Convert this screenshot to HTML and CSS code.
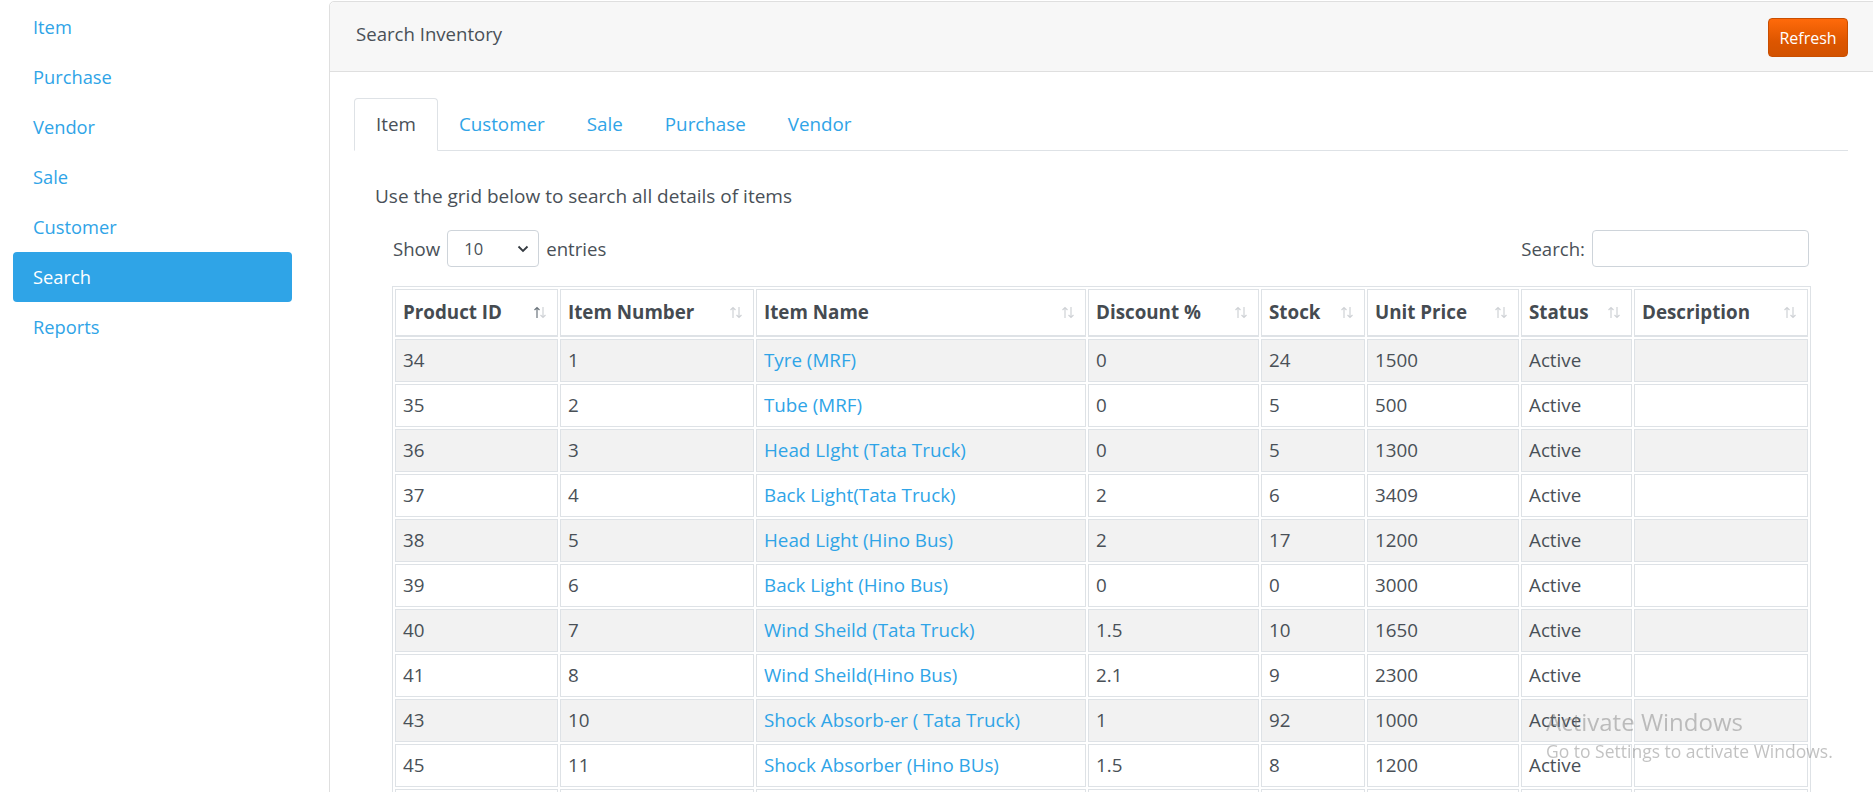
FILE: index.html
```html
<!DOCTYPE html>
<html lang="en">
<head>
<meta charset="utf-8">
<title>Search Inventory</title>
<link rel="stylesheet" href="styles.css">
</head>
<body>
<div class="page">
  <nav class="sidebar">
    <a class="side-link" href="#">Item</a>
    <a class="side-link" href="#">Purchase</a>
    <a class="side-link" href="#">Vendor</a>
    <a class="side-link" href="#">Sale</a>
    <a class="side-link" href="#">Customer</a>
    <a class="side-link active" href="#">Search</a>
    <a class="side-link" href="#">Reports</a>
  </nav>
  <main class="card">
    <div class="card-header">
      <span class="card-title">Search Inventory</span>
      <button class="btn-refresh">Refresh</button>
    </div>
    <div class="card-body">
      <ul class="tabs">
        <li><a class="tab active" href="#">Item</a></li>
        <li><a class="tab" href="#">Customer</a></li>
        <li><a class="tab" href="#">Sale</a></li>
        <li><a class="tab" href="#">Purchase</a></li>
        <li><a class="tab" href="#">Vendor</a></li>
      </ul>
      <p class="intro">Use the grid below to search all details of items</p>
      <div class="dt-wrapper">
        <div class="dt-controls">
          <label class="dt-length">Show
            <span class="select">10
              <svg class="caret" width="12" height="8" viewBox="0 0 12 8"><path d="M1.5 1.5 L6 6 L10.5 1.5" fill="none" stroke="#343a40" stroke-width="1.8"/></svg>
            </span>
            entries</label>
          <label class="dt-search">Search: <span class="search-input"></span></label>
        </div>
        <table class="grid">
          <thead>
            <tr>
              <th class="c1"><div class="th-in"><span>Product ID</span><svg class="sort" width="14" height="13" viewBox="0 0 14 13"><path d="M4 12 V1.5 M1.5 4 L4 1.5 L6.5 4" fill="none" stroke="#6c757d" stroke-width="1.2"/><path d="M10 1 V11.5 M7.5 9 L10 11.5 L12.5 9" fill="none" stroke="#cfd2d6" stroke-width="1.2"/></svg></div></th>
              <th class="c2"><div class="th-in"><span>Item Number</span><svg class="sort" width="14" height="13" viewBox="0 0 14 13"><path d="M4 12 V1.5 M1.5 4 L4 1.5 L6.5 4" fill="none" stroke="#cfd2d6" stroke-width="1.2"/><path d="M10 1 V11.5 M7.5 9 L10 11.5 L12.5 9" fill="none" stroke="#cfd2d6" stroke-width="1.2"/></svg></div></th>
              <th class="c3"><div class="th-in"><span>Item Name</span><svg class="sort" width="14" height="13" viewBox="0 0 14 13"><path d="M4 12 V1.5 M1.5 4 L4 1.5 L6.5 4" fill="none" stroke="#cfd2d6" stroke-width="1.2"/><path d="M10 1 V11.5 M7.5 9 L10 11.5 L12.5 9" fill="none" stroke="#cfd2d6" stroke-width="1.2"/></svg></div></th>
              <th class="c4"><div class="th-in"><span>Discount %</span><svg class="sort" width="14" height="13" viewBox="0 0 14 13"><path d="M4 12 V1.5 M1.5 4 L4 1.5 L6.5 4" fill="none" stroke="#cfd2d6" stroke-width="1.2"/><path d="M10 1 V11.5 M7.5 9 L10 11.5 L12.5 9" fill="none" stroke="#cfd2d6" stroke-width="1.2"/></svg></div></th>
              <th class="c5"><div class="th-in"><span>Stock</span><svg class="sort" width="14" height="13" viewBox="0 0 14 13"><path d="M4 12 V1.5 M1.5 4 L4 1.5 L6.5 4" fill="none" stroke="#cfd2d6" stroke-width="1.2"/><path d="M10 1 V11.5 M7.5 9 L10 11.5 L12.5 9" fill="none" stroke="#cfd2d6" stroke-width="1.2"/></svg></div></th>
              <th class="c6"><div class="th-in"><span>Unit Price</span><svg class="sort" width="14" height="13" viewBox="0 0 14 13"><path d="M4 12 V1.5 M1.5 4 L4 1.5 L6.5 4" fill="none" stroke="#cfd2d6" stroke-width="1.2"/><path d="M10 1 V11.5 M7.5 9 L10 11.5 L12.5 9" fill="none" stroke="#cfd2d6" stroke-width="1.2"/></svg></div></th>
              <th class="c7"><div class="th-in"><span>Status</span><svg class="sort" width="14" height="13" viewBox="0 0 14 13"><path d="M4 12 V1.5 M1.5 4 L4 1.5 L6.5 4" fill="none" stroke="#cfd2d6" stroke-width="1.2"/><path d="M10 1 V11.5 M7.5 9 L10 11.5 L12.5 9" fill="none" stroke="#cfd2d6" stroke-width="1.2"/></svg></div></th>
              <th class="c8"><div class="th-in"><span>Description</span><svg class="sort" width="14" height="13" viewBox="0 0 14 13"><path d="M4 12 V1.5 M1.5 4 L4 1.5 L6.5 4" fill="none" stroke="#cfd2d6" stroke-width="1.2"/><path d="M10 1 V11.5 M7.5 9 L10 11.5 L12.5 9" fill="none" stroke="#cfd2d6" stroke-width="1.2"/></svg></div></th>
            </tr>
          </thead>
          <tbody>
            <tr><td>34</td><td>1</td><td><a href="#">Tyre (MRF)</a></td><td>0</td><td>24</td><td>1500</td><td>Active</td><td></td></tr>
            <tr><td>35</td><td>2</td><td><a href="#">Tube (MRF)</a></td><td>0</td><td>5</td><td>500</td><td>Active</td><td></td></tr>
            <tr><td>36</td><td>3</td><td><a href="#">Head LIght (Tata Truck)</a></td><td>0</td><td>5</td><td>1300</td><td>Active</td><td></td></tr>
            <tr><td>37</td><td>4</td><td><a href="#">Back Light(Tata Truck)</a></td><td>2</td><td>6</td><td>3409</td><td>Active</td><td></td></tr>
            <tr><td>38</td><td>5</td><td><a href="#">Head Light (Hino Bus)</a></td><td>2</td><td>17</td><td>1200</td><td>Active</td><td></td></tr>
            <tr><td>39</td><td>6</td><td><a href="#">Back Light (Hino Bus)</a></td><td>0</td><td>0</td><td>3000</td><td>Active</td><td></td></tr>
            <tr><td>40</td><td>7</td><td><a href="#">Wind Sheild (Tata Truck)</a></td><td>1.5</td><td>10</td><td>1650</td><td>Active</td><td></td></tr>
            <tr><td>41</td><td>8</td><td><a href="#">Wind Sheild(Hino Bus)</a></td><td>2.1</td><td>9</td><td>2300</td><td>Active</td><td></td></tr>
            <tr><td>43</td><td>10</td><td><a href="#">Shock Absorb-er ( Tata Truck)</a></td><td>1</td><td>92</td><td>1000</td><td>Active</td><td></td></tr>
            <tr><td>45</td><td>11</td><td><a href="#">Shock Absorber (Hino BUs)</a></td><td>1.5</td><td>8</td><td>1200</td><td>Active</td><td></td></tr>
          </tbody>
          <tfoot>
            <tr><td>Product ID</td><td>Item Number</td><td>Item Name</td><td>Discount %</td><td>Stock</td><td>Unit Price</td><td>Status</td><td>Description</td></tr>
          </tfoot>
        </table>
      </div>
    </div>
  </main>
</div>
<div class="watermark">
  <div class="wm-title">Activate Windows</div>
  <div class="wm-sub">Go to Settings to activate Windows.</div>
</div>
</body>
</html>
```

FILE: styles.css
```css
html, body {
  margin: 0;
  padding: 0;
  overflow: hidden;
  height: 792px;
  background: #fff;
}
body {
  font-family: "Open Sans", "Noto Sans", sans-serif;
  color: #495057;
  font-size: 16px;
}
a { text-decoration: none; }

.page {
  display: flex;
  align-items: flex-start;
  width: 1875px;
}

.sidebar {
  width: 279px;
  flex: none;
  margin: 2px 37px 0 13px;
  display: flex;
  flex-direction: column;
}
.side-link {
  display: block;
  height: 50px;
  line-height: 50px;
  padding: 0 20px;
  font-size: 18.3px;
  color: #2fa4e7;
  border-radius: 4px;
}
.side-link.active {
  background: #2fa4e7;
  color: #fff;
}

.card {
  flex: none;
  width: 1544px;
  margin-top: 1px;
  border: 1px solid #dfdfdf;
  border-radius: 5px 0 0 0;
  height: 900px;
}
.card-header {
  height: 69px;
  background: #f7f7f7;
  border-bottom: 1px solid #dfdfdf;
  border-radius: 5px 0 0 0;
  display: flex;
  align-items: center;
  justify-content: space-between;
  padding: 0 26px 0 26px;
}
.card-title {
  font-size: 18.6px;
  color: #495057;
  margin-top: -6px;
}
.btn-refresh {
  width: 80px;
  height: 39px;
  border: 1px solid #c94e00;
  border-radius: 4px;
  color: #fff;
  font-family: "Open Sans", sans-serif;
  font-size: 16px;
  padding: 0;
  background-image: linear-gradient(#ff6a0a, #dd5600 60%, #d25200);
  margin-top: 2px;
}

.card-body {
  padding: 26px 26px 0 24px;
}
.tabs {
  list-style: none;
  margin: 0;
  padding: 0;
  display: flex;
  border-bottom: 1px solid #dee2e6;
}
.tab {
  display: block;
  padding: 12px 20px;
  line-height: 27px;
  font-size: 18.8px;
  color: #2fa4e7;
  border: 1px solid transparent;
  border-radius: 4px 4px 0 0;
  margin-bottom: -1px;
}
.tab.active {
  color: #495057;
  padding: 12px 21px;
  border-color: #dee2e6 #dee2e6 #fff;
  background: #fff;
}

.intro {
  margin: 32px 0 0 21px;
  line-height: 27px;
  font-size: 19px;
}

.dt-wrapper {
  margin: 20px 39px 0 38px;
}
.dt-controls {
  display: flex;
  justify-content: space-between;
  align-items: center;
  height: 37px;
  margin-bottom: 19px;
}
.dt-length, .dt-search {
  display: flex;
  align-items: center;
  font-size: 18.6px;
}
.dt-length { padding-left: 1px; }
.select {
  display: inline-flex;
  align-items: center;
  justify-content: space-between;
  box-sizing: border-box;
  width: 92px;
  height: 37px;
  margin: 0 7px 0 7px;
  padding: 0 9px 0 16px;
  border: 1px solid #ced4da;
  border-radius: 4px;
  font-size: 16.5px;
  color: #495057;
}
.search-input {
  display: inline-block;
  box-sizing: border-box;
  width: 217px;
  height: 37px;
  margin-left: 7px;
  border: 1px solid #ced4da;
  border-radius: 4px;
}

.grid {
  width: 1418px;
  table-layout: fixed;
  border-collapse: separate;
  border-spacing: 2px;
  border: 1px solid #dee2e6;
  font-size: 18.8px;
}
.grid th, .grid td {
  box-sizing: border-box;
  border: 1px solid #dee2e6;
  padding: 7px 7px;
  line-height: 27px;
  text-align: left;
  white-space: nowrap;
  overflow: hidden;
}
.grid th {
  padding: 9px 7px 9px 7px;
  border-bottom-width: 2px;
  font-weight: 700;
  color: #454b51;
}
.th-in {
  display: flex;
  align-items: center;
  justify-content: space-between;
}
.sort { flex: none; margin-right: 3px; }
.c1 { width: 163px; }
.c2 { width: 194px; }
.c3 { width: 330px; }
.c4 { width: 171px; }
.c5 { width: 104px; }
.c6 { width: 152px; }
.c7 { width: 111px; }
.c8 { width: 174px; }
.grid tbody tr:nth-child(odd) td { background: #f2f2f2; }
.grid td a { color: #2fa4e7; }
.grid tfoot td { font-weight: 700; }

.watermark {
  position: fixed;
  left: 1546px;
  top: 705px;
  color: rgba(120, 120, 120, 0.45);
  pointer-events: none;
}
.wm-title {
  font-size: 24px;
  line-height: 34px;
}
.wm-sub {
  font-size: 17.5px;
  line-height: 24px;
  margin-top: 0;
}
```
